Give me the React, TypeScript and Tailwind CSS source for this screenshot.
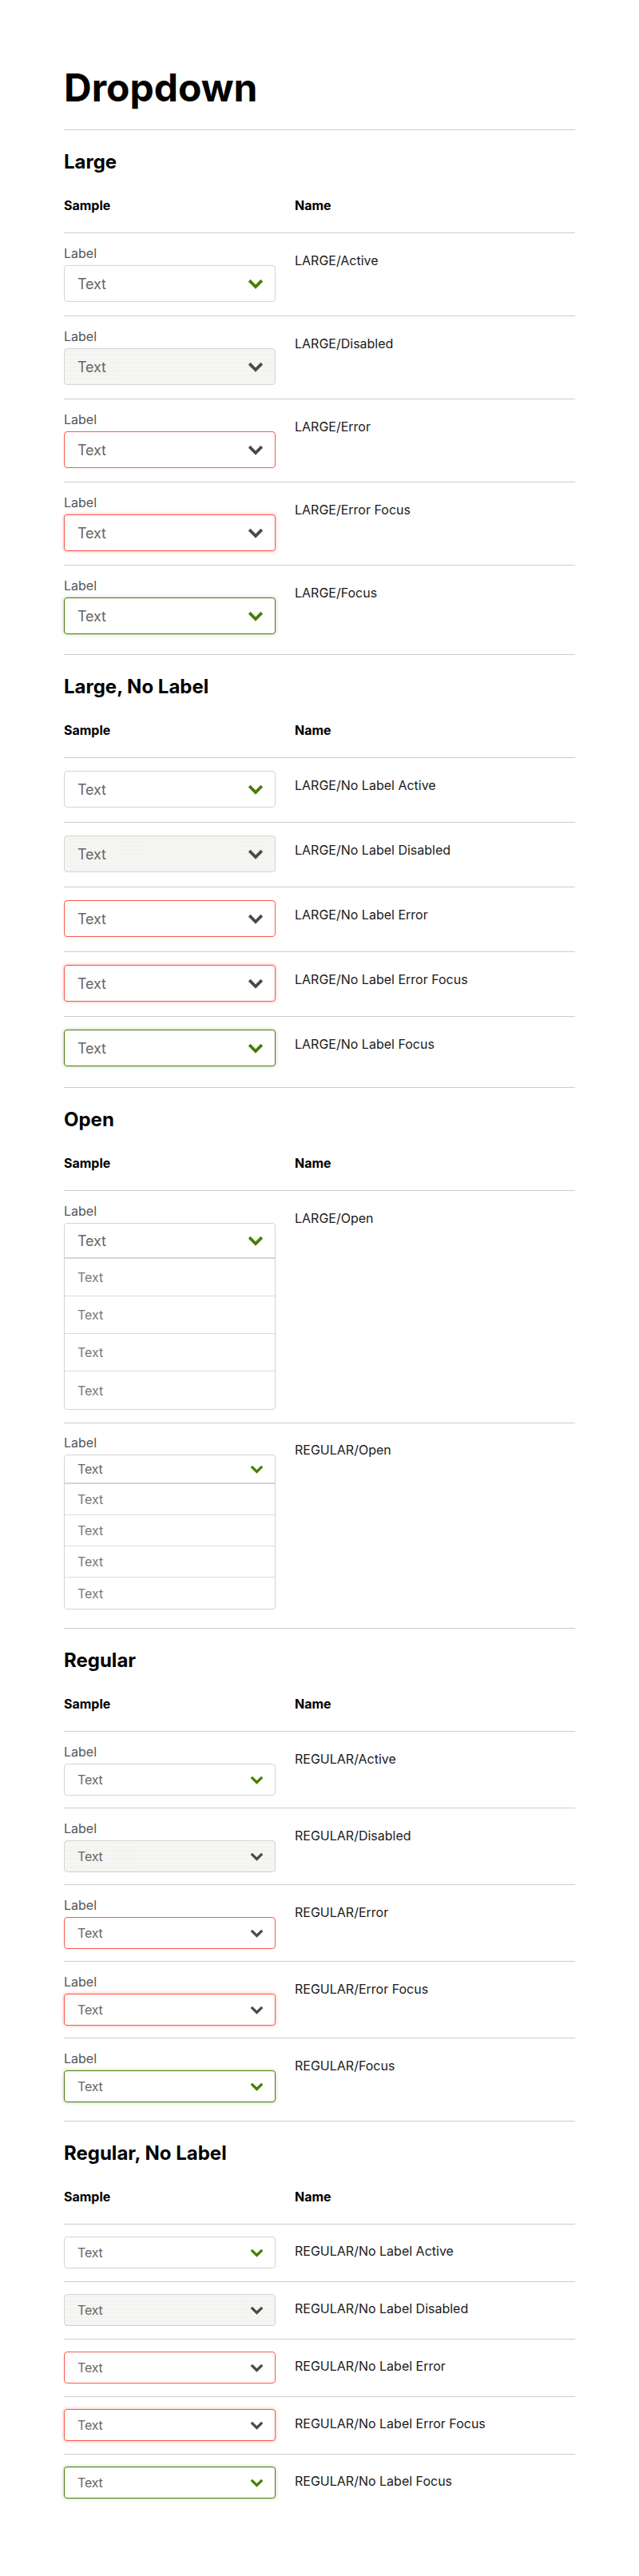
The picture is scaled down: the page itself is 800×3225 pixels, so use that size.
import React from "react"

type Size = "large" | "regular"
type State = "active" | "disabled" | "error" | "errorFocus" | "focus"

interface RowData {
  state: State
  name: string
}

const font = { fontFamily: "Inter, 'Noto Sans', sans-serif" }

function Chevron({ size, green }: { size: Size; green: boolean }) {
  const color = green ? "#4a7d00" : "#4a4a4a"
  if (size === "large") {
    return (
      <svg width="20" height="13" viewBox="0 0 20 13" fill="none">
        <path d="M2.2 2.2 L10 10 L17.8 2.2" stroke={color} strokeWidth="3.8" strokeLinejoin="miter" />
      </svg>
    )
  }
  return (
    <svg width="17" height="11" viewBox="0 0 17 11" fill="none">
      <path d="M1.8 1.8 L8.5 8.5 L15.2 1.8" stroke={color} strokeWidth="3.2" strokeLinejoin="miter" />
    </svg>
  )
}

const stateClass: Record<State, string> = {
  active: "border-[#d4d4d4] bg-white",
  disabled:
    "border-[#d4d4d4] bg-[#f5f5f3] bg-[radial-gradient(#e2e2dd_0.6px,transparent_0.8px)] bg-[size:5px_5px]",
  error: "border-[#f8594a] bg-white",
  errorFocus: "border-[#f8594a] bg-white shadow-[0_0_4px_rgba(248,89,74,0.5)]",
  focus: "border-[#4b7d0b] bg-white shadow-[0_0_4px_rgba(75,125,11,0.4)]",
}

function Select({ size, state }: { size: Size; state: State }) {
  const green = state === "active" || state === "focus"
  return (
    <div
      className={`flex w-[265px] items-center justify-between rounded border pl-4 pr-[14px] text-[#666] ${stateClass[state]} ${
        size === "large" ? "h-[46px] text-[18px] tracking-[-0.01em]" : "h-10 text-[16px] tracking-[-0.01em]"
      }`}
    >
      <span>Text</span>
      <Chevron size={size} green={green} />
    </div>
  )
}

function OpenSelect({ size }: { size: Size }) {
  const large = size === "large"
  return (
    <div className="w-[265px] overflow-hidden rounded border border-[#d4d4d4] bg-white">
      <div
        className={`flex items-center justify-between border-b-2 border-[#d6d6d6] pl-4 pr-[14px] text-[#666] ${
          large ? "h-[44px] text-[18px] tracking-[-0.01em]" : "h-9 text-[16px] tracking-[-0.01em]"
        }`}
      >
        <span>Text</span>
        <Chevron size={size} green />
      </div>
      {[0, 1, 2, 3].map((i) => (
        <div
          key={i}
          className={`flex items-center pl-4 text-[16px] text-[#777] ${large ? "h-[47px]" : "h-[39px]"} ${
            i < 3 ? "border-b border-[#dcdcdc]" : ""
          }`}
        >
          Text
        </div>
      ))}
    </div>
  )
}

function Label() {
  return <div className="text-[16px] leading-6 text-[#555]">Label</div>
}

function TableHeader() {
  return (
    <div className="grid grid-cols-[289px_1fr] border-b border-[#cccccc] pt-[26px] pb-[22px] text-[16px] font-bold leading-6 text-black">
      <div>Sample</div>
      <div>Name</div>
    </div>
  )
}

function Section({
  title,
  children,
  last,
}: {
  title: string
  children: React.ReactNode
  last?: boolean
}) {
  return (
    <section className={`mt-6 ${last ? "" : "border-b border-[#cccccc] pb-2"}`}>
      <h2 className="text-[24px] font-bold leading-8 text-black">{title}</h2>
      <TableHeader />
      {children}
    </section>
  )
}

function Row({ children, name, labeled, pad, last }: { children: React.ReactNode; name: string; labeled: boolean; pad: string; last: boolean }) {
  return (
    <div className={`grid grid-cols-[289px_1fr] ${pad} ${last ? "" : "border-b border-[#cccccc]"}`}>
      <div className={labeled ? "" : ""}>{children}</div>
      <div className={`text-[16px] leading-6 text-[#1a1a1a] ${labeled ? "pt-[9px]" : "pt-[6px]"}`}>{name}</div>
    </div>
  )
}

const states: State[] = ["active", "disabled", "error", "errorFocus", "focus"]

const largeRows: RowData[] = [
  { state: "active", name: "LARGE/Active" },
  { state: "disabled", name: "LARGE/Disabled" },
  { state: "error", name: "LARGE/Error" },
  { state: "errorFocus", name: "LARGE/Error Focus" },
  { state: "focus", name: "LARGE/Focus" },
]

const largeNoLabelRows: RowData[] = [
  { state: "active", name: "LARGE/No Label Active" },
  { state: "disabled", name: "LARGE/No Label Disabled" },
  { state: "error", name: "LARGE/No Label Error" },
  { state: "errorFocus", name: "LARGE/No Label Error Focus" },
  { state: "focus", name: "LARGE/No Label Focus" },
]

const regularRows: RowData[] = [
  { state: "active", name: "REGULAR/Active" },
  { state: "disabled", name: "REGULAR/Disabled" },
  { state: "error", name: "REGULAR/Error" },
  { state: "errorFocus", name: "REGULAR/Error Focus" },
  { state: "focus", name: "REGULAR/Focus" },
]

const regularNoLabelRows: RowData[] = [
  { state: "active", name: "REGULAR/No Label Active" },
  { state: "disabled", name: "REGULAR/No Label Disabled" },
  { state: "error", name: "REGULAR/No Label Error" },
  { state: "errorFocus", name: "REGULAR/No Label Error Focus" },
  { state: "focus", name: "REGULAR/No Label Focus" },
]

export default function App() {
  void states
  return (
    <div className="min-h-[3225px] bg-white px-20 pt-20 pb-[64px]" style={font}>
      <h1 className="border-b border-[#cccccc] pb-[22px] text-[48px] font-bold leading-[60px] text-black">Dropdown</h1>

      <Section title="Large">
        {largeRows.map((r, i) => (
          <Row key={r.name} name={r.name} labeled pad="pt-[13px] pb-[17px]" last={i === largeRows.length - 1}>
            <Label />
            <div className="mt-[3px]">
              <Select size="large" state={r.state} />
            </div>
          </Row>
        ))}
      </Section>

      <Section title="Large, No Label">
        {largeNoLabelRows.map((r, i) => (
          <Row key={r.name} name={r.name} labeled={false} pad="pt-4 pb-[18px]" last={i === largeNoLabelRows.length - 1}>
            <Select size="large" state={r.state} />
          </Row>
        ))}
      </Section>

      <Section title="Open">
        <Row name="LARGE/Open" labeled pad="pt-[13px] pb-[16px]" last={false}>
          <Label />
          <div className="mt-[3px]">
            <OpenSelect size="large" />
          </div>
        </Row>
        <Row name="REGULAR/Open" labeled pad="pt-[12px] pb-[15px]" last>
          <Label />
          <div className="mt-[3px]">
            <OpenSelect size="regular" />
          </div>
        </Row>
      </Section>

      <Section title="Regular">
        {regularRows.map((r, i) => (
          <Row key={r.name} name={r.name} labeled pad="pt-[13px] pb-[15px]" last={i === regularRows.length - 1}>
            <Label />
            <div className="mt-[3px]">
              <Select size="regular" state={r.state} />
            </div>
          </Row>
        ))}
      </Section>

      <Section title="Regular, No Label" last>
        {regularNoLabelRows.map((r, i) => (
          <Row key={r.name} name={r.name} labeled={false} pad="pt-[15px] pb-4" last={i === regularNoLabelRows.length - 1}>
            <Select size="regular" state={r.state} />
          </Row>
        ))}
      </Section>
    </div>
  )
}
